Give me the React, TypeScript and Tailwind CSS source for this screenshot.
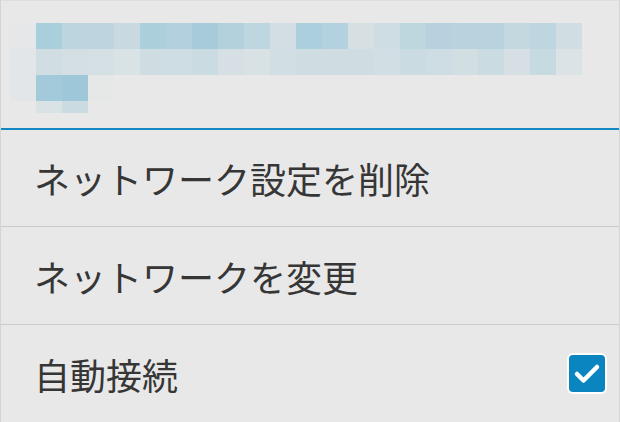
import React from 'react';

// pixelated (mosaic) title, one class per 26px cell
const mosaicRows: { h: string; start: number; cells: string[] }[] = [
  {
    h: 'h-[26px]',
    start: 0,
    cells: [
      'bg-[#e6e7e8]', 'bg-[#aacfdc]', 'bg-[#bdd5df]', 'bg-[#bed5df]', 'bg-[#c8dae0]', 'bg-[#accfdc]',
      'bg-[#b2d0dd]', 'bg-[#a7cbdb]', 'bg-[#b3d1dd]', 'bg-[#bdd6e0]', 'bg-[#d2dee3]', 'bg-[#abcfdc]',
      'bg-[#b3d1de]', 'bg-[#d6e0e3]', 'bg-[#cddde3]', 'bg-[#bdd7df]', 'bg-[#b7d2de]', 'bg-[#b9d3de]',
      'bg-[#b9d3de]', 'bg-[#c4d8e0]', 'bg-[#bdd6e0]', 'bg-[#d0dee3]',
    ],
  },
  {
    h: 'h-[26px]',
    start: 0,
    cells: [
      'bg-[#e3e6e8]', 'bg-[#d0dee3]', 'bg-[#d3dfe3]', 'bg-[#d5e0e4]', 'bg-[#d9e2e5]', 'bg-[#cfdde3]',
      'bg-[#cddde3]', 'bg-[#cadce2]', 'bg-[#d5dfe4]', 'bg-[#d8e2e5]', 'bg-[#d1dee3]', 'bg-[#cfdde3]',
      'bg-[#cfdde3]', 'bg-[#cfdde2]', 'bg-[#d1dee3]', 'bg-[#cadce2]', 'bg-[#cddde3]', 'bg-[#d1dfe3]',
      'bg-[#cadce2]', 'bg-[#d6dfe4]', 'bg-[#c6dbe1]', 'bg-[#dce3e6]',
    ],
  },
  {
    h: 'h-[26px]',
    start: 0,
    cells: ['bg-[#e2e6e8]', 'bg-[#a3cadb]', 'bg-[#9fc7da]', 'bg-[#e6e8e8]'],
  },
  {
    h: 'h-[12px]',
    start: 1,
    cells: ['bg-[#d9e2e5]', 'bg-[#cadce1]'],
  },
];

const CheckBox: React.FC = () => (
  <div className="w-[40px] h-[41px] rounded-[6px] bg-white p-[2px] flex">
    <div className="flex-1 rounded-[4px] bg-[#0a85c0] flex items-center justify-center">
      <svg width="36" height="37" viewBox="0 0 36 37">
        <polyline
          points="8,19 14.5,25.5 28,12"
          fill="none"
          stroke="white"
          strokeWidth="4.5"
          strokeLinecap="round"
          strokeLinejoin="round"
        />
      </svg>
    </div>
  </div>
);

const MenuRow: React.FC<{ label: string; h: string; right?: React.ReactNode }> = ({ label, h, right }) => (
  <div className={`${h} flex items-center justify-between pl-[33px] pr-[12px]`}>
    <span className="text-[36px] leading-none text-[#363636]">{label}</span>
    {right}
  </div>
);

const App: React.FC = () => {
  return (
    <div
      className="w-[620px] h-[422px] overflow-hidden bg-[#e8e8e8] flex flex-col border-t border-t-[#dedede] border-x border-x-[#d4d4d4]"
      style={{ fontFamily: '"Noto Sans CJK JP", "Noto Sans", sans-serif' }}
    >
      <div className="h-[127px] pt-[22px] pl-[9px] flex flex-col">
        {mosaicRows.map((row, i) => (
          <div key={i} className={`${row.h} flex`} style={{ paddingLeft: row.start * 26 }}>
            {row.cells.map((c, j) => (
              <div key={j} className={`w-[26px] h-full ${c}`} />
            ))}
          </div>
        ))}
      </div>
      <div className="h-[2px] bg-[#1188c4]" />
      <MenuRow label="ネットワーク設定を削除" h="h-[96px]" />
      <div className="h-px bg-[#cbcbcb]" />
      <MenuRow label="ネットワークを変更" h="h-[97px]" />
      <div className="h-px bg-[#cbcbcb]" />
      <MenuRow label="自動接続" h="h-[97px]" right={<CheckBox />} />
    </div>
  );
};

export default App;
